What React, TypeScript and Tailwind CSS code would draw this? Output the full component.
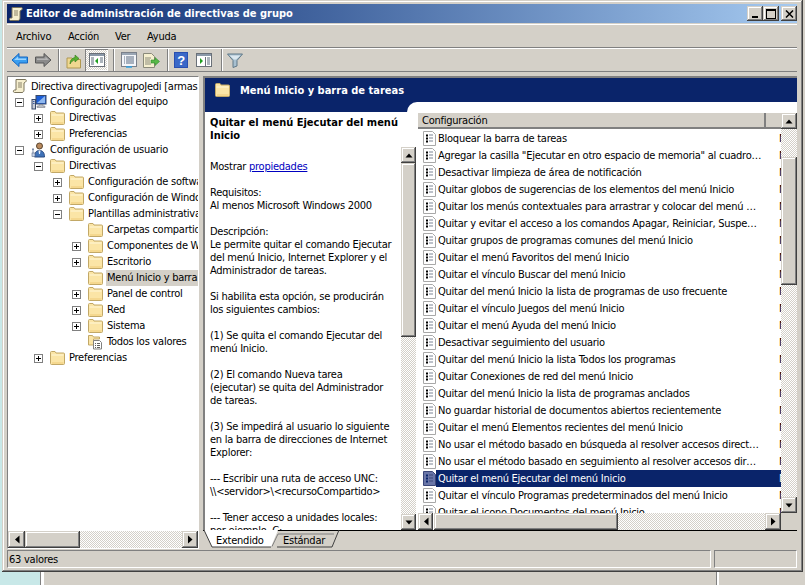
import React from "react";

const raised = "shadow-[inset_-1px_-1px_0_#404040,inset_1px_1px_0_#d4d0c8,inset_-2px_-2px_0_#808080,inset_2px_2px_0_#fff]";
const dither = "[background:repeating-conic-gradient(#d4d0c8_0_25%,#fff_0_50%)_0_0/2px_2px]";

function Scroll({ size = 16 }: { size?: number }) {
  return (
    <svg width={size} height={size} viewBox="0 0 16 16" className="shrink-0">
      <path d="M4 1.5h9.5c1 0 1 2 0 2.5L12 5v7c0 1-.5 2.5-2 2.5H2.5c-1.5 0-1.5-2.5 0-2.5H4z" fill="#f6efcf" stroke="#7a735a" />
      <path d="M6 5h4M6 7h4M6 9h4" stroke="#8a836a" />
    </svg>
  );
}

function Folder() {
  return (
    <svg width="15" height="14" viewBox="0 0 15 14" className="shrink-0">
      <path d="M.5 3V1.500a1 1 0 0 1 1-1H5l1 1.500h7.500a1 1 0 0 1 1 1v9.500a1 1 0 0 1-1 1h-12a1 1 0 0 1-1-1z" fill="#fbe5a6" stroke="#c2a867" />
      <path d="M1.500 3.500h12v1h-12z" fill="#fff6d8" />
      <path d="M2 11.500h11.500v1H2z" fill="#efcb78" />
    </svg>
  );
}

function Computer() {
  return (
    <svg width="16" height="16" viewBox="0 0 16 16" className="shrink-0">
      <rect x="5" y="1.500" width="10" height="8.500" fill="#1c5ed6" stroke="#3a4a6a" />
      <path d="M6 9l8-7v7z" fill="#8fb8f0" />
      <path d="M8 10.500h4v1.500h2v1.500H6V12h2z" fill="#b8bcc4" stroke="#6a6f7a" strokeWidth=".5" />
      <rect x="1" y="5.500" width="3.500" height="9.500" fill="#c8ccd6" stroke="#3a4a6a" />
      <path d="M2 7.500h1.500M2 9.500h1.500" stroke="#3a5aa0" />
    </svg>
  );
}

function User() {
  return (
    <svg width="16" height="16" viewBox="0 0 16 16" className="shrink-0">
      <circle cx="8.500" cy="4" r="3" fill="#b98a5e" stroke="#5a4630" />
      <path d="M3.500 15c0-4 1.500-6.500 5-6.500s5 2.500 5 6.500z" fill="#3f72b8" stroke="#2a4a80" />
      <path d="M7.500 8.500h2l-.5 3.500h-1z" fill="#e8eef8" />
      <path d="M2 6v5M1 7.500h2" stroke="#7a8aa8" />
      <rect x="1" y="11" width="3" height="3.500" fill="#c8d4e8" stroke="#5a6a88" strokeWidth=".6" />
    </svg>
  );
}

function AllValues() {
  return (
    <svg width="16" height="16" viewBox="0 0 16 16" className="shrink-0">
      <path d="M.5 3V1.500h4l1 1.500h6v2h-6v6H.5z" fill="#fbe5a6" stroke="#c2a867" />
      <path d="M5.500 6.500h6l2 2v6.500h-8z" fill="#fff" stroke="#808080" />
      <path d="M7 9.500h1M9 9.500h3M7 11.500h1M9 11.500h3M7 13.500h1M9 13.500h3" stroke="#606060" />
    </svg>
  );
}

function PolicyIcon({ selected = false }: { selected?: boolean }) {
  return (
    <svg width="13" height="15" viewBox="0 0 13 15" className="shrink-0">
      <path d="M.5.500h9l3 3v11H.5z" fill={selected ? "#6a76a8" : "#fff"} stroke={selected ? "#3a4678" : "#a8a8a8"} />
      <path d="M3 4.500h2M3 7.500h2M3 10.500h2" stroke={selected ? "#0a246a" : "#000"} strokeWidth="2" />
      <path d="M6 4h4M6 7h4M6 10h4" stroke={selected ? "#3a4678" : "#7a8494"} />
    </svg>
  );
}

function Expander({ open }: { open: boolean }) {
  return (
    <span className="relative block h-[9px] w-[9px] shrink-0 border border-[#808080] bg-white">
      <span className="absolute left-[1px] top-[3px] h-px w-[5px] bg-black" />
      {!open && <span className="absolute left-[3px] top-[1px] h-[5px] w-px bg-black" />}
    </span>
  );
}

type Node = { t: string; lvl: number; exp?: "o" | "c"; icon?: "pc" | "user" | "all"; sel?: boolean };
const tree: Node[] = [
  { t: "Configuración del equipo", lvl: 0, exp: "o", icon: "pc" },
  { t: "Directivas", lvl: 1, exp: "c" },
  { t: "Preferencias", lvl: 1, exp: "c" },
  { t: "Configuración de usuario", lvl: 0, exp: "o", icon: "user" },
  { t: "Directivas", lvl: 1, exp: "o" },
  { t: "Configuración de software", lvl: 2, exp: "c" },
  { t: "Configuración de Windows", lvl: 2, exp: "c" },
  { t: "Plantillas administrativas", lvl: 2, exp: "o" },
  { t: "Carpetas compartidas", lvl: 3 },
  { t: "Componentes de Windows", lvl: 3, exp: "c" },
  { t: "Escritorio", lvl: 3, exp: "c" },
  { t: "Menú Inicio y barra de tareas", lvl: 3, sel: true },
  { t: "Panel de control", lvl: 3, exp: "c" },
  { t: "Red", lvl: 3, exp: "c" },
  { t: "Sistema", lvl: 3, exp: "c" },
  { t: "Todos los valores", lvl: 3, icon: "all" },
  { t: "Preferencias", lvl: 1, exp: "c" },
];

const indent = ["w-[7px]", "w-[26px]", "w-[45px]", "w-[64px]"];

function TreeRow({ n }: { n: Node }) {
  return (
    <div className="flex h-4 items-center whitespace-nowrap">
      <span className={`${indent[n.lvl]} shrink-0`} />
      <span className="flex w-[16px] shrink-0 items-center">{n.exp && <Expander open={n.exp === "o"} />}</span>
      <span className="flex w-[18px] shrink-0 items-center">
        {n.icon === "pc" ? <Computer /> : n.icon === "user" ? <User /> : n.icon === "all" ? <AllValues /> : <Folder />}
      </span>
      <span className={`h-4 pl-px pr-1 leading-[16px] ${n.sel ? "bg-[#d4d0c8]" : ""}`}>{n.t}</span>
    </div>
  );
}

const items = [
  "Bloquear la barra de tareas",
  "Agregar la casilla \"Ejecutar en otro espacio de memoria\" al cuadro…",
  "Desactivar limpieza de área de notificación",
  "Quitar globos de sugerencias de los elementos del menú Inicio",
  "Quitar los menús contextuales para arrastrar y colocar del menú …",
  "Quitar y evitar el acceso a los comandos Apagar, Reiniciar, Suspe…",
  "Quitar grupos de programas comunes del menú Inicio",
  "Quitar el menú Favoritos del menú Inicio",
  "Quitar el vínculo Buscar del menú Inicio",
  "Quitar del menú Inicio la lista de programas de uso frecuente",
  "Quitar el vínculo Juegos del menú Inicio",
  "Quitar el menú Ayuda del menú Inicio",
  "Desactivar seguimiento del usuario",
  "Quitar del menú Inicio la lista Todos los programas",
  "Quitar Conexiones de red del menú Inicio",
  "Quitar del menú Inicio la lista de programas anclados",
  "No guardar historial de documentos abiertos recientemente",
  "Quitar el menú Elementos recientes del menú Inicio",
  "No usar el método basado en búsqueda al resolver accesos direct…",
  "No usar el método basado en seguimiento al resolver accesos dir…",
  "Quitar el menú Ejecutar del menú Inicio",
  "Quitar el vínculo Programas predeterminados del menú Inicio",
  "Quitar el icono Documentos del menú Inicio",
];

const paragraphs: string[][] = [
  ["Requisitos:", "Al menos Microsoft Windows 2000"],
  ["Descripción:", "Le permite quitar el comando Ejecutar", "del menú Inicio, Internet Explorer y el", "Administrador de tareas."],
  ["Si habilita esta opción, se producirán", "los siguientes cambios:"],
  ["(1) Se quita el comando Ejecutar del", "menú Inicio."],
  ["(2) El comando Nueva tarea", "(ejecutar) se quita del Administrador", "de tareas."],
  ["(3) Se impedirá al usuario lo siguiente", "en la barra de direcciones de Internet", "Explorer:"],
  ["--- Escribir una ruta de acceso UNC:", "\\\\<servidor>\\<recursoCompartido>"],
  ["--- Tener acceso a unidades locales:", "por ejemplo, C:"],
];

function ArrowBtn({ dir, className = "" }: { dir: "u" | "d" | "l" | "r"; className?: string }) {
  const p = { u: "M4 2.500L.500 6.500h7z", d: "M4 6.500L.500 2.500h7z", l: "M2 4.500L6.500 0.500v8z", r: "M6.500 4.500L2 0.500v8z" }[dir];
  return (
    <div className={`flex shrink-0 items-center justify-center bg-[#d4d0c8] ${raised} ${className}`}>
      <svg width="8" height="9" viewBox="0 0 8 9"><path d={p} fill="#000" /></svg>
    </div>
  );
}

function VScroll({ thumbTop, thumbH, w = "w-[16px]" }: { thumbTop: string; thumbH: string; w?: string }) {
  return (
    <div className={`flex h-full ${w} shrink-0 flex-col`}>
      <ArrowBtn dir="u" className="h-[16px]" />
      <div className={`flex min-h-0 flex-1 flex-col ${dither}`}>
        <div className={`${thumbTop} shrink-0`} />
        <div className={`${thumbH} shrink-0 bg-[#d4d0c8] ${raised}`} />
      </div>
      <ArrowBtn dir="d" className="h-[16px]" />
    </div>
  );
}

function Sep() {
  return <div className="mx-[1px] h-[22px] w-[2px] shrink-0 border-l border-r border-l-[#808080] border-r-white" />;
}

function Toolbar() {
  return (
    <div className="flex h-[24px] items-center border-y border-b-[#808080] border-t-white pl-[4px]">
      <svg width="18" height="16" viewBox="0 0 18 16" className="shrink-0">
        <path d="M1 8l7-6.500V5h8.500v6H8v3.500z" fill="#3a9ef0" stroke="#1666c0" />
        <path d="M3 8l4-3.500V6.500h8v1.500H3z" fill="#9ad4ff" />
      </svg>
      <svg width="18" height="16" viewBox="0 0 18 16" className="ml-[5px] shrink-0">
        <path d="M17 8l-7-6.500V5H1.500v6H10v3.500z" fill="#8a8a8a" stroke="#585858" />
        <path d="M3 6.500h8.500V4.500L15 8H3z" fill="#b4b4b4" />
      </svg>
      <div className="ml-[5px]"><Sep /></div>
      <svg width="16" height="17" viewBox="0 0 16 17" className="ml-[5px] shrink-0">
        <path d="M1 16V6h5l1 1.500h7.500V16z" fill="#f0d890" stroke="#b09850" />
        <path d="M4 12c0-4 2-6 5-6.500V3l4 3.500L9 10V8c-2 .2-3.500 1.500-5 4z" fill="#58b030" stroke="#2f7a18" strokeWidth=".6" />
      </svg>
      <div className={`ml-[3px] flex h-[22px] w-[23px] shrink-0 items-center justify-center ${dither} shadow-[inset_1px_1px_0_#808080,inset_-1px_-1px_0_#fff]`}>
        <svg width="16" height="14" viewBox="0 0 16 14">
          <rect x=".5" y=".500" width="15" height="13" fill="#fff" stroke="#6a7078" />
          <path d="M1 1h14v2H1z" fill="#8a98a8" />
          <path d="M2 5h3M2 7h3M2 9h3M2 11h3M11 5h3M11 7h3M11 9h3" stroke="#5a6a7a" />
          <path d="M9 5v6L6 8z" fill="#20a020" />
        </svg>
      </div>
      <div className="ml-[4px]"><Sep /></div>
      <svg width="16" height="16" viewBox="0 0 16 16" className="ml-[5px] shrink-0">
        <rect x=".5" y=".500" width="15" height="14" fill="#f4f6fa" stroke="#7a808a" />
        <path d="M1 1h14v2H1z" fill="#9aa6b4" />
        <path d="M3 5h1M5 5h8M3 7h1M5 7h8M3 9h1M5 9h8M3 11h1M5 11h8" stroke="#5a6a80" />
        <path d="M5 15h6" stroke="#30a0e0" strokeWidth="1.500" />
      </svg>
      <svg width="17" height="15" viewBox="0 0 17 15" className="ml-[6px] shrink-0">
        <path d="M.5.500h8l3 3v11h-11z" fill="#f6f0d0" stroke="#8a8a7a" />
        <path d="M2 5h6M2 7h5M2 9h5M2 11h6" stroke="#8a8a7a" />
        <path d="M8 7h4V4.500L16.500 8.500 12 12.500V10H8z" fill="#58b848" stroke="#2f8a28" strokeWidth=".6" />
      </svg>
      <div className="ml-[6px]"><Sep /></div>
      <svg width="14" height="16" viewBox="0 0 14 16" className="ml-[4px] shrink-0">
        <rect width="14" height="16" fill="#2a4fb0" />
        <rect x="1" y="1" width="12" height="14" fill="#3a68c8" />
        <text x="7" y="13" textAnchor="middle" fill="#fff" fontSize="13" fontWeight="700" fontFamily="'Liberation Sans',sans-serif">?</text>
      </svg>
      <svg width="16" height="14" viewBox="0 0 16 14" className="ml-[8px] shrink-0">
        <rect x=".5" y=".500" width="15" height="13" fill="#fff" stroke="#6a7078" />
        <path d="M1 1h14v2H1z" fill="#8a98a8" />
        <path d="M11 5h3M11 7h3M11 9h3M11 11h3" stroke="#5a6a7a" />
        <path d="M4 5v6l3-3z" fill="#20a020" />
        <path d="M9.500 4v9" stroke="#6a7078" />
      </svg>
      <div className="ml-[8px]"><Sep /></div>
      <svg width="16" height="15" viewBox="0 0 16 15" className="ml-[3px] shrink-0">
        <path d="M.5 1h15L10 7.500V13l-4 1.500v-7z" fill="#a8c0d0" stroke="#607888" />
        <path d="M2.500 2.500h11L9 6.500H7z" fill="#dce8f0" />
      </svg>
    </div>
  );
}

export default function App() {
  const font = "font-['DejaVu_Sans_Condensed','DejaVu_Sans',sans-serif]";
  return (
    <div className={`flex h-[585px] w-[805px] flex-col overflow-hidden bg-[#d4d0c8] text-[11px] leading-[13px] tracking-[-0.25px] text-black ${font}`}>
      <div className="flex h-[572px] shrink-0">
        <div className="w-[2px] shrink-0 bg-[#c8e8e8]" />
        <div className="flex h-[572px] w-[801px] shrink-0 flex-col bg-[#d4d0c8] pl-[5px] pr-[6px] pt-[4px] shadow-[inset_-1px_-1px_0_#404040,inset_1px_1px_0_#d4d0c8,inset_-2px_-2px_0_#808080,inset_2px_2px_0_#fff]">
          {/* title */}
          <div className="flex h-[19px] shrink-0 items-center bg-gradient-to-r from-[#0a246a] to-[#a6caf0] pl-[1px] pr-0">
            <Scroll />
            <span className="ml-[2px] font-bold tracking-normal text-white">Editor de administración de directivas de grupo</span>
            <div className="ml-auto flex">
              <div className={`flex h-[15px] w-[16px] items-end justify-center bg-[#d4d0c8] pb-[3px] ${raised}`}><span className="block h-[2px] w-[6px] bg-black" /></div>
              <div className={`flex h-[15px] w-[16px] items-center justify-center bg-[#d4d0c8] ${raised}`}><span className="block h-[10px] w-[10px] border border-t-2 border-black" /></div>
              <div className={`ml-[2px] flex h-[15px] w-[16px] items-center justify-center bg-[#d4d0c8] ${raised}`}>
                <svg width="9" height="8" viewBox="0 0 9 8"><path d="M1 .5l7 7M8 .5l-7 7" stroke="#000" strokeWidth="1.500" /></svg>
              </div>
            </div>
          </div>
          {/* menu */}
          <div className="mt-[1px] flex h-[24px] shrink-0 items-center border-y border-b-[#808080] border-t-white pl-[9px]">
            <span className="w-[52px] shrink-0">Archivo</span>
            <span className="w-[47px] shrink-0">Acción</span>
            <span className="w-[32px] shrink-0">Ver</span>
            <span>Ayuda</span>
          </div>
          <Toolbar />
          {/* main */}
          <div className="mt-[4px] flex min-h-0 flex-1 gap-[4px]">
            {/* tree pane */}
            <div className="flex h-[473px] w-[192px] shrink-0 flex-col border border-b-white border-l-[#808080] border-r-white border-t-[#808080] bg-white">
              <div className="min-h-0 flex-1 overflow-hidden pt-[1px]">
                <div className="flex h-4 items-center whitespace-nowrap">
                  <span className="w-[4px] shrink-0" /><Scroll />
                  <span className="ml-[3px]">Directiva directivagrupoJedi [armas.local] Directiva</span>
                </div>
                {tree.map((n, i) => <TreeRow key={i} n={n} />)}
              </div>
              <div className="flex h-[17px] shrink-0">
                <ArrowBtn dir="l" className="w-[17px]" />
                <div className={`w-[55px] shrink-0 bg-[#d4d0c8] ${raised}`} />
                <div className={`flex-1 ${dither}`} />
                <ArrowBtn dir="r" className="w-[16px]" />
              </div>
            </div>
            {/* right pane */}
            <div className="flex h-[475px] min-w-0 flex-1 flex-col">
              <div className="flex h-[454px] shrink-0 flex-col border-l-2 border-t-2 border-l-[#808080] border-t-[#808080] bg-white">
                <div className="shrink-0 bg-[#0a246a]">
                  <div className="flex h-[24px] items-center pl-[10px]">
                    <Folder />
                    <span className="ml-[10px] font-bold tracking-normal text-white">Menú Inicio y barra de tareas</span>
                  </div>
                  <div className="h-[10px]">
                    <div className="ml-[202px] h-full rounded-tl-[10px] bg-white" />
                  </div>
                </div>
                <div className="flex min-h-0 flex-1">
                  {/* description */}
                  <div className="h-full w-[196px] shrink-0 overflow-hidden pl-[5px] pt-[4px]">
                    <div className="font-bold tracking-normal">Quitar el menú Ejecutar del menú<br />Inicio</div>
                    <div className="mt-[18px] whitespace-nowrap">Mostrar <span className="text-[#0000c0] underline">propiedades</span></div>
                    {paragraphs.map((p, i) => (
                      <div key={i} className="mt-[13px] whitespace-nowrap">
                        {p.map((l, j) => <div key={j}>{l}</div>)}
                      </div>
                    ))}
                  </div>
                  <div className="flex h-full w-[15px] shrink-0 flex-col pt-[35px]">
                    <VScroll thumbTop="h-0" thumbH="h-[174px]" w="w-[15px]" />
                  </div>
                  <div className="w-[2px] shrink-0" />
                  {/* list */}
                  <div className="flex h-full min-w-0 flex-1 flex-col pt-px">
                    <div className="flex min-h-0 flex-1">
                      <div className="flex min-w-0 flex-1 flex-col">
                        <div className="flex h-[16px] shrink-0 border-b-2 border-[#808080] bg-[#d4d0c8]">
                          <div className="w-[348px] shrink-0 border-r-2 border-r-[#808080] pl-[4px] leading-[15px]">Configuración</div>
                        </div>
                        <div className="min-h-0 flex-1 overflow-hidden pt-px">
                          {items.map((t, i) => {
                            const sel = i === 20;
                            return (
                              <div key={t} className="flex h-[17px] items-center whitespace-nowrap pl-[5px]">
                                <PolicyIcon selected={sel} />
                                <span className={`flex h-[17px] w-[345px] shrink-0 overflow-hidden pl-[2px] leading-[17px] ${sel ? "bg-[#0a246a] text-white" : ""}`}>
                                  <span className="w-[341px] shrink-0">{t}</span>
                                  <span className="shrink-0">No configurada</span>
                                </span>
                              </div>
                            );
                          })}
                        </div>
                      </div>
                      <VScroll thumbTop="h-[28px]" thumbH="h-[128px]" />
                    </div>
                    <div className="flex h-[17px] shrink-0">
                      <ArrowBtn dir="l" className="w-[15px]" />
                      <div className={`ml-px w-[184px] shrink-0 bg-[#d4d0c8] ${raised}`} />
                      <div className={`flex-1 ${dither}`} />
                      <ArrowBtn dir="r" className="w-[16px]" />
                      <div className="w-[16px] shrink-0 bg-[#d4d0c8]" />
                    </div>
                  </div>
                </div>
              </div>
              {/* tabs */}
              <div className="relative h-[20px] shrink-0 border-t border-black">
                <svg width="150" height="20" viewBox="0 0 150 20" className="absolute left-0 top-[-1px]">
                  <path d="M1 0l8 17h59l7-17z" fill="#fff" />
                  <path d="M1 0l8 17h59" fill="none" stroke="#404040" />
                  <path d="M69 16.500l6-12.500h56" fill="none" stroke="#808080" />
                  <path d="M74 17h55l7-17" fill="none" stroke="#404040" />
                </svg>
                <span className="absolute left-[13px] top-[3px]">Extendido</span>
                <span className="absolute left-[80px] top-[3px]">Estándar</span>
              </div>
            </div>
          </div>
          {/* status */}
          <div className="mb-[4px] flex h-[18px] shrink-0 gap-[3px]">
            <div className="flex flex-1 items-center border border-b-white border-l-[#808080] border-r-white border-t-[#808080] pl-px">63 valores</div>
            <div className="w-[83px] border border-b-white border-l-[#808080] border-r-white border-t-[#808080]" />
          </div>
        </div>
        <div className="w-[2px] shrink-0 bg-[#d4d0c8]" />
      </div>
      {/* window behind */}
      <div className="flex min-h-0 flex-1">
        <div className="w-[40px] shrink-0 bg-[#c8e8e8]" />
        <div className="w-[4px] shrink-0 border-l border-l-[#808080] bg-white" />
        <div className="w-[673px] shrink-0 border-r border-r-[#808080]" />
        <div className="w-[2px] shrink-0 bg-white" />
      </div>
    </div>
  );
}
